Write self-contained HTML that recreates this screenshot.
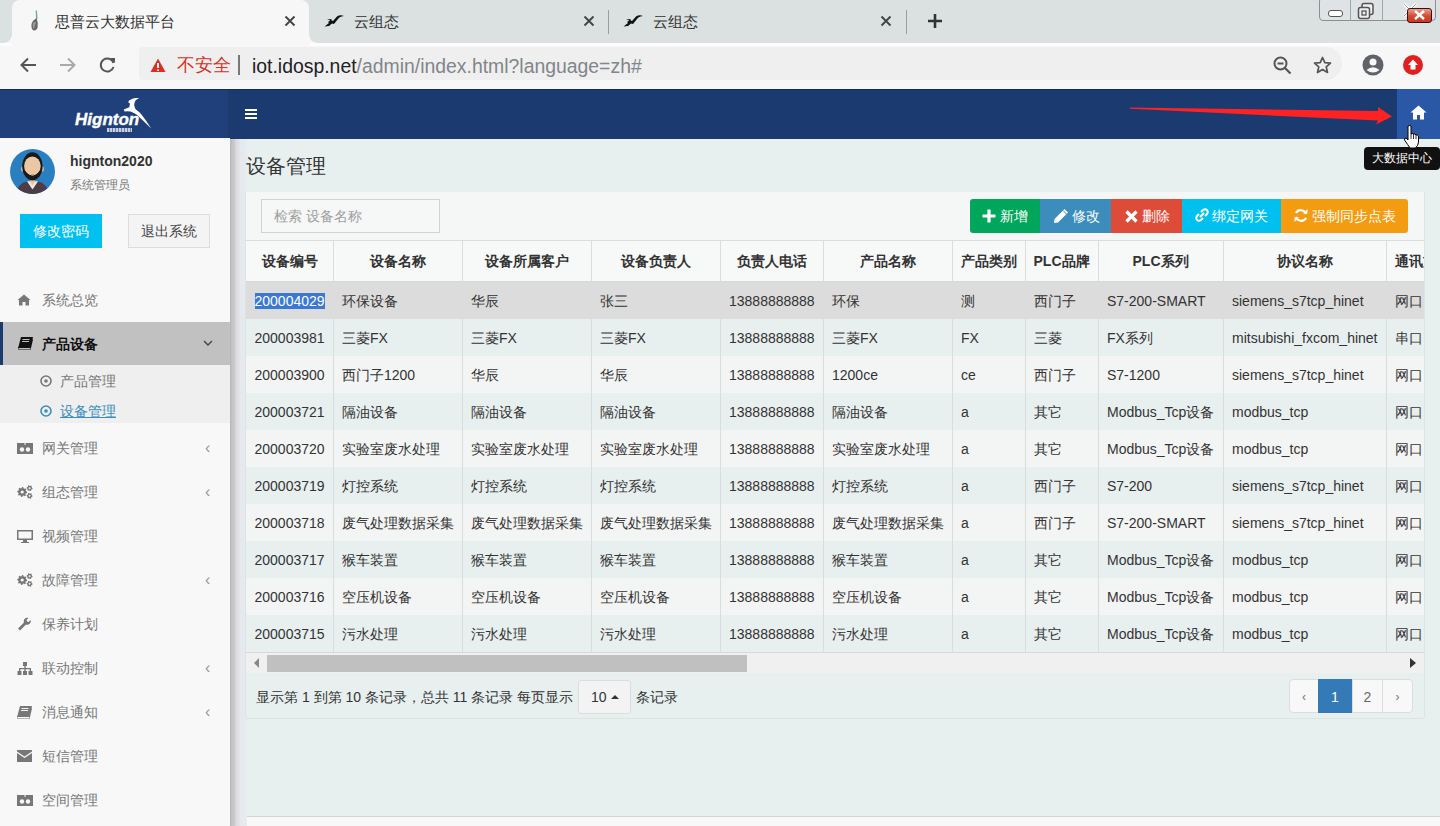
<!DOCTYPE html>
<html><head><meta charset="utf-8">
<style>
*{box-sizing:border-box;margin:0;padding:0}
html,body{width:1440px;height:826px;overflow:hidden;background:#e8f0ef;font-family:"Liberation Sans",sans-serif;color:#333}
.abs{position:absolute}
#tabbar{position:absolute;left:0;top:0;width:1440px;height:43px;background:#dbe1e0}
#tab1{position:absolute;left:12px;top:0;width:297px;height:46px;background:#f7f7f7;border-radius:8px 8px 0 0;z-index:2}
.tabt,.tabx{z-index:3}
.tabt{position:absolute;top:12px;font-size:15px;color:#333;line-height:20px}
.tabx{position:absolute;top:15px;width:12px;height:12px}
.tsep{position:absolute;top:10px;width:1px;height:24px;background:#9aa0a0}
#toolbar{position:absolute;left:0;top:43px;width:1440px;height:46px;background:#f7f7f7;border-top:3px solid #fcfcfd}
#addr{position:absolute;left:139px;top:47px;width:1203px;height:33px;background:#efefef;border-radius:4px 16px 16px 4px}
#header{position:absolute;left:0;top:89px;width:1440px;height:50px;background:#1b3a6f;border-top:1px solid #142c57}
#logo{position:absolute;left:0;top:89px;width:228px;height:50px;background:#1f407a;border-top:1px solid #142c57}
#homebtn{position:absolute;left:1396px;top:89px;width:44px;height:50px;background:#2a58a6;border-left:1px solid #173a86}
#sidebar{position:absolute;left:0;top:138px;width:230px;height:688px;background:#f8f8f8}
#shadow{position:absolute;left:230px;top:139px;width:17px;height:687px;background:linear-gradient(to right,#b5b5b8 0px,#c4c4c7 2px,#cdcdd1 5px,#dcdce1 6px,#e0e0e5 9px,#e5e8ed 10px,#e6ebef 16px,#e7efee 17px)}
.mi{position:absolute;left:0;width:230px;height:44px;line-height:44px;font-size:14px;color:#777}
.mic{position:absolute;left:17px;top:0;height:44px;display:flex;align-items:center}
.mt{position:absolute;left:42px;top:0}
.chev{position:absolute;left:205px;top:0px;font-size:16px;color:#999}
#content{position:absolute;left:242px;top:138px;width:1198px;height:679px;background:#e8f0ef}
#footer{position:absolute;left:230px;top:816px;width:1210px;height:10px;background:#f8f8f8;border-top:1px solid #d2d6d6}
#box{position:absolute;left:245px;top:192px;width:1180px;height:527px;background:linear-gradient(#f5f6f6 0,#f5f6f6 48px,#e8f0ef 48px);border:1px solid #dde3e3;border-top:0;border-radius:0 0 3px 3px}
.thead{position:absolute;left:246px;width:1178px;background:#f7f8f8;border-top:1px solid #dcdcdc;border-bottom:1px solid #d8d8d8}
.th{position:absolute;text-align:center;font-weight:bold;font-size:14px;color:#333}
.tr{position:absolute;left:246px;width:1178px;height:37px}
.r1{background:#dcdcdc}
.re{background:#e8efef}
.ro{background:#f3f5f5}
.td{position:absolute;height:37px;line-height:37px;font-size:14px;color:#333;white-space:nowrap}
.sel{background:#3a78d6;color:#fff}
.vl{position:absolute;top:241px;width:1px;height:411px;background:#dadddd}
#clip{position:absolute;left:0;top:0;width:1424px;height:826px;overflow:hidden}
.btn{position:absolute;top:199px;height:34px;line-height:34px;color:#fff;font-size:14px;white-space:nowrap}
.pg{position:absolute;top:679px;height:34px;line-height:34px;text-align:center;font-size:14px;border:1px solid #ddd;background:#f8f8f8;color:#666}
</style></head><body>
<div id="tabbar"></div>
<div id="tab1"></div>
<div class="abs" style="left:4px;top:35px;width:8px;height:8px;z-index:2;background:radial-gradient(circle 8px at 0 0,#dbe1e0 7.4px,#f7f7f7 8px)"></div>
<div class="abs" style="left:309px;top:35px;width:8px;height:8px;z-index:2;background:radial-gradient(circle 8px at 100% 0,#dbe1e0 7.4px,#f7f7f7 8px)"></div>
<div class="abs" style="left:30px;top:10px;width:10px;height:22px;z-index:3"><svg width="10" height="22" viewBox="0 0 10 22"><path d="M6.3 0.5 L6.8 9" stroke="#6aa" stroke-width="1.4"/><path d="M6.5 8 Q3 10 1.5 14 Q1 19 3.5 20.5 Q6 21 7.5 18 Q8.5 13 6.5 8Z" fill="#666"/><path d="M3 13 Q4.5 11 6 12 Q5 16 4 19 Q2 17 3 13Z" fill="#999"/></svg></div>
<div class="tabt" style="left:55px">思普云大数据平台</div>
<svg class="tabx" style="left:284px" viewBox="0 0 12 12"><path d="M1.5 1.5 L10.5 10.5 M10.5 1.5 L1.5 10.5" stroke="#444" stroke-width="1.9"/></svg>
<svg class="abs" style="left:324px;top:14px" width="21" height="13" viewBox="0 0 21 13"><path d="M0.5 12.5 L5 9 L4 8 L7 6 L9 7 L13 2.5 Q16 0.5 20 2 L17.5 2.5 Q15 3 14 5 L10 10 L8 9.5 L5 12 Z M3 5.5 L8 5 L6.5 6.5Z" fill="#111"/></svg>
<div class="tabt" style="left:354px">云组态</div>
<svg class="tabx" style="left:583px" viewBox="0 0 12 12"><path d="M1.5 1.5 L10.5 10.5 M10.5 1.5 L1.5 10.5" stroke="#444" stroke-width="1.9"/></svg>
<div class="tsep" style="left:608px"></div>
<svg class="abs" style="left:623px;top:14px" width="21" height="13" viewBox="0 0 21 13"><path d="M0.5 12.5 L5 9 L4 8 L7 6 L9 7 L13 2.5 Q16 0.5 20 2 L17.5 2.5 Q15 3 14 5 L10 10 L8 9.5 L5 12 Z M3 5.5 L8 5 L6.5 6.5Z" fill="#111"/></svg>
<div class="tabt" style="left:653px">云组态</div>
<svg class="tabx" style="left:880px" viewBox="0 0 12 12"><path d="M1.5 1.5 L10.5 10.5 M10.5 1.5 L1.5 10.5" stroke="#444" stroke-width="1.9"/></svg>
<div class="tsep" style="left:906px"></div>
<svg class="abs" style="left:927px;top:13px" width="16" height="16" viewBox="0 0 16 16"><path d="M8 1 V15 M1 8 H15" stroke="#333" stroke-width="2.6"/></svg>
<!-- window controls -->
<div class="abs" style="left:1319px;top:-3px;width:117px;height:24px;border:1.5px solid #8a9090;border-radius:4px;background:#dfe3e6"></div>
<div class="abs" style="left:1350px;top:0;width:1px;height:21px;background:#9aa"></div>
<div class="abs" style="left:1382px;top:0;width:1px;height:21px;background:#9aa"></div>
<div class="abs" style="left:1328px;top:10px;width:15px;height:7px;border:1.5px solid #555;border-radius:3px;background:#fff"></div>
<svg class="abs" style="left:1357px;top:2px" width="18" height="18" viewBox="0 0 18 18"><rect x="5" y="1.5" width="11" height="11" rx="2" fill="#eee" stroke="#555" stroke-width="1.5"/><rect x="1.5" y="5.5" width="11" height="11" rx="2" fill="#eee" stroke="#555" stroke-width="1.5"/><rect x="5" y="9" width="4" height="4" fill="none" stroke="#555" stroke-width="1.3"/></svg>
<svg class="abs" style="left:1402px;top:3px" width="16" height="14" viewBox="0 0 16 14"><path d="M2 1 L14 13 M14 1 L2 13" stroke="#fff" stroke-width="3"/><path d="M2 1 L14 13 M14 1 L2 13" stroke="#9aa" stroke-width="1"/></svg>
<div class="abs" style="left:1407px;top:8px;width:25px;height:15px;border:1.3px solid #3a1010;border-radius:3px;background:linear-gradient(#e8a090,#d24a35 55%,#c83a28)"></div>
<svg class="abs" style="left:1414px;top:10px" width="11" height="10" viewBox="0 0 11 10"><path d="M1 1 L10 9 M10 1 L1 9" stroke="#fff" stroke-width="2.4"/></svg>
<!-- toolbar -->
<div id="toolbar"></div>
<div id="addr"></div>
<svg class="abs" style="left:20px;top:57px" width="17" height="16" viewBox="0 0 17 16"><path d="M16 8 H2 M8 1.5 L1.5 8 L8 14.5" fill="none" stroke="#555" stroke-width="2"/></svg>
<svg class="abs" style="left:59px;top:57px" width="17" height="16" viewBox="0 0 17 16"><path d="M1 8 H15 M9 1.5 L15.5 8 L9 14.5" fill="none" stroke="#aaa" stroke-width="2"/></svg>
<svg class="abs" style="left:99px;top:56px" width="18" height="18" viewBox="0 0 18 18"><path d="M14.5 7 A6.5 6.5 0 1 0 14.5 11" fill="none" stroke="#555" stroke-width="2"/><path d="M11 2 H16 V7Z" fill="#555"/></svg>
<svg class="abs" style="left:150px;top:58px" width="16" height="15" viewBox="0 0 16 15"><path d="M8 0.5 L15.5 14 H0.5Z" fill="#d93025"/><path d="M8 5 V10 M8 11.5 V13" stroke="#fff" stroke-width="1.8"/></svg>
<div class="abs" style="left:177px;top:53px;font-size:18px;line-height:24px;color:#d93025">不安全</div>
<div class="abs" style="left:238px;top:55px;width:2px;height:20px;background:#777"></div>
<div class="abs" style="left:252px;top:53px;font-size:19.4px;line-height:26px;color:#202124;white-space:nowrap">iot.idosp.net<span style="color:#80868b">/admin/index.html?language=zh#</span></div>
<svg class="abs" style="left:1273px;top:56px" width="19" height="19" viewBox="0 0 19 19"><circle cx="7.5" cy="7.5" r="6" fill="none" stroke="#555" stroke-width="2"/><path d="M4.5 7.5 H10.5" stroke="#555" stroke-width="2"/><path d="M12 12 L17.5 17.5" stroke="#555" stroke-width="2.2"/></svg>
<svg class="abs" style="left:1313px;top:56px" width="19" height="18" viewBox="0 0 19 18"><path d="M9.5 1.5 L11.8 6.7 L17.5 7.1 L13.2 10.8 L14.5 16.5 L9.5 13.5 L4.5 16.5 L5.8 10.8 L1.5 7.1 L7.2 6.7Z" fill="none" stroke="#555" stroke-width="1.7" stroke-linejoin="round"/></svg>
<svg class="abs" style="left:1362px;top:54px" width="22" height="22" viewBox="0 0 22 22"><circle cx="11" cy="11" r="10.5" fill="#5f6368"/><circle cx="11" cy="8" r="3.5" fill="#f7f7f7"/><path d="M4.5 16 Q11 10.5 17.5 16 Q11 21 4.5 16Z" fill="#f7f7f7"/></svg>
<svg class="abs" style="left:1403px;top:55px" width="20" height="20" viewBox="0 0 20 20"><circle cx="10" cy="10" r="10" fill="#e02020"/><path d="M10 4.5 L15 10 H12.5 V14.5 H7.5 V10 H5Z" fill="#fff"/></svg>
<!-- header -->
<div id="header"></div>
<div id="logo"></div>
<div class="abs" style="left:75px;top:110px;font-size:17px;line-height:20.5px;font-weight:bold;font-style:italic;color:#fff;letter-spacing:0px;-webkit-text-stroke:0.4px #fff">Hignton</div>
<svg class="abs" style="left:115px;top:92px" width="40" height="40" viewBox="0 0 40 40"><path d="M24 6.2 Q20.5 5.4 18 6.6 L14 8.6 L13.3 10.6 L15 11.6 L14.3 15.2 Q11 16.6 8.8 17.6 L9.6 19.4 Q12.5 19 15.6 19.4 Q19 20.6 21.5 22.6 Q29 29.5 36.2 36.4 Q32 29.5 25.5 21.2 Q22.5 18.8 20.6 17.2 Q19.2 14.8 19.2 12.8 Q19.5 10 20.5 8.6 Q21.8 7 24 6.6Z" fill="#fff"/></svg>
<div class="abs" style="left:107px;top:128px;width:25px;height:4px;background:repeating-linear-gradient(to right,rgba(255,255,255,0.75) 0 2px,rgba(255,255,255,0.35) 2px 3px)"></div>
<div class="abs" style="left:245px;top:109px;width:12px;height:2px;background:#fff"></div>
<div class="abs" style="left:245px;top:113px;width:12px;height:2px;background:#fff"></div>
<div class="abs" style="left:245px;top:117px;width:12px;height:2px;background:#fff"></div>
<svg class="abs" style="left:1130px;top:106px" width="264" height="20" viewBox="0 0 264 20"><path d="M0 1.5 L248 5 L248 1 L262 10.5 L246 18.5 L248 14.5 L0 2.8Z" fill="#ff2222"/></svg>
<div id="homebtn"></div>
<svg class="abs" style="left:1410px;top:105px" width="17" height="15" viewBox="0 0 17 15"><path d="M8.5 0.5 L0.5 7.5 L3 7.5 L3 14.5 L7 14.5 L7 10 L10 10 L10 14.5 L14 14.5 L14 7.5 L16.5 7.5Z" fill="#fff"/></svg>
<!-- sidebar -->
<div id="sidebar"></div>
<svg class="abs" style="left:10px;top:149px" width="45" height="45" viewBox="0 0 45 45"><defs><clipPath id="cc"><circle cx="22.5" cy="22.5" r="22.5"/></clipPath></defs><g clip-path="url(#cc)"><rect width="45" height="45" fill="#2a7fc1"/><path d="M5 46 Q8 34 17 32.5 L22.5 40 L28 32.5 Q37 34 40 46Z" fill="#4d3b47"/><path d="M17 32.3 L22.5 40.5 L28 32.3Z" fill="#f3e6da"/><path d="M19.5 31.5 L22.5 36.5 L25.5 31.5Z" fill="#e8c3a0"/><ellipse cx="12.8" cy="20" rx="1.7" ry="2.7" fill="#e8c3a0"/><ellipse cx="32.2" cy="20" rx="1.7" ry="2.7" fill="#e8c3a0"/><ellipse cx="22.4" cy="17.3" rx="10.2" ry="14" fill="#1a1a1a"/><ellipse cx="22.4" cy="17" rx="8.3" ry="9.6" fill="#eac7a5"/><path d="M15 22 Q22.4 31 29.8 22 L29.8 26 Q22.4 32 15 26Z" fill="#1a1a1a"/><rect x="21.3" y="25.2" width="2.4" height="1.6" fill="#c98a50"/></g></svg>
<div class="abs" style="left:70px;top:153px;font-size:14px;font-weight:bold;color:#333">hignton2020</div>
<div class="abs" style="left:70px;top:177px;font-size:12px;color:#777">系统管理员</div>
<div class="abs" style="left:20px;top:214px;width:82px;height:34px;background:#00c0ef;color:#fff;font-size:14px;line-height:34px;text-align:center">修改密码</div>
<div class="abs" style="left:128px;top:214px;width:82px;height:34px;background:#f4f4f4;border:1px solid #ddd;color:#444;font-size:14px;line-height:32px;text-align:center">退出系统</div>
<div class="mi" style="top:278px"><span class="mic"><svg width="14" height="12" viewBox="0 0 14 12"><path d="M7 0.5 L0.5 6 L2 6 L2 11.5 L5.5 11.5 L5.5 8 L8.5 8 L8.5 11.5 L12 11.5 L12 6 L13.5 6 Z" fill="#777"/></svg></span><span class="mt">系统总览</span></div>
<div class="mi" style="top:426px"><span class="mic"><svg width="16" height="12" viewBox="0 0 16 12"><path d="M0 1 H16 V12 H0 Z" fill="#777"/><circle cx="5" cy="7.5" r="2.2" fill="#f8f8f8"/><circle cx="11" cy="7.5" r="2.2" fill="#f8f8f8"/><path d="M7.5 0 H8.5 V3 H7.5Z" fill="#f8f8f8"/></svg></span><span class="mt">网关管理</span><span class="chev">‹</span></div>
<div class="mi" style="top:470px"><span class="mic"><svg width="16" height="14" viewBox="0 0 16 14"><path d="M10.20 7.00 L10.10 7.98 L8.80 8.49 L8.44 9.17 L8.74 10.54 L7.98 11.16 L6.69 10.60 L5.96 10.83 L5.20 12.00 L4.22 11.90 L3.71 10.60 L3.03 10.24 L1.66 10.54 L1.04 9.78 L1.60 8.49 L1.37 7.76 L0.20 7.00 L0.30 6.02 L1.60 5.51 L1.96 4.83 L1.66 3.46 L2.42 2.84 L3.71 3.40 L4.44 3.17 L5.20 2.00 L6.18 2.10 L6.69 3.40 L7.37 3.76 L8.74 3.46 L9.36 4.22 L8.80 5.51 L9.03 6.24Z M6.80 7.00 A1.6 1.6 0 1 0 3.60 7.00 A1.6 1.6 0 1 0 6.80 7.00Z M15.60 3.20 L15.50 3.98 L14.59 4.35 L14.23 4.83 L14.10 5.80 L13.38 6.10 L12.60 5.50 L12.00 5.42 L11.10 5.80 L10.48 5.32 L10.61 4.35 L10.38 3.80 L9.60 3.20 L9.70 2.42 L10.61 2.05 L10.97 1.57 L11.10 0.60 L11.82 0.30 L12.60 0.90 L13.20 0.98 L14.10 0.60 L14.72 1.08 L14.59 2.05 L14.82 2.60Z M13.60 3.20 A1.0 1.0 0 1 0 11.60 3.20 A1.0 1.0 0 1 0 13.60 3.20Z M15.60 10.80 L15.50 11.58 L14.59 11.95 L14.23 12.43 L14.10 13.40 L13.38 13.70 L12.60 13.10 L12.00 13.02 L11.10 13.40 L10.48 12.92 L10.61 11.95 L10.38 11.40 L9.60 10.80 L9.70 10.02 L10.61 9.65 L10.97 9.17 L11.10 8.20 L11.82 7.90 L12.60 8.50 L13.20 8.58 L14.10 8.20 L14.72 8.68 L14.59 9.65 L14.82 10.20Z M13.60 10.80 A1.0 1.0 0 1 0 11.60 10.80 A1.0 1.0 0 1 0 13.60 10.80Z" fill="#777" fill-rule="evenodd"/></svg></span><span class="mt">组态管理</span><span class="chev">‹</span></div>
<div class="mi" style="top:514px"><span class="mic"><svg width="16" height="13" viewBox="0 0 16 13"><path d="M0 0 H16 V10 H0Z M1.5 1.5 V8.5 H14.5 V1.5Z" fill="#777" fill-rule="evenodd"/><path d="M6 10 H10 V12 H12 V13 H4 V12 H6Z" fill="#777"/></svg></span><span class="mt">视频管理</span></div>
<div class="mi" style="top:558px"><span class="mic"><svg width="16" height="14" viewBox="0 0 16 14"><path d="M10.20 7.00 L10.10 7.98 L8.80 8.49 L8.44 9.17 L8.74 10.54 L7.98 11.16 L6.69 10.60 L5.96 10.83 L5.20 12.00 L4.22 11.90 L3.71 10.60 L3.03 10.24 L1.66 10.54 L1.04 9.78 L1.60 8.49 L1.37 7.76 L0.20 7.00 L0.30 6.02 L1.60 5.51 L1.96 4.83 L1.66 3.46 L2.42 2.84 L3.71 3.40 L4.44 3.17 L5.20 2.00 L6.18 2.10 L6.69 3.40 L7.37 3.76 L8.74 3.46 L9.36 4.22 L8.80 5.51 L9.03 6.24Z M6.80 7.00 A1.6 1.6 0 1 0 3.60 7.00 A1.6 1.6 0 1 0 6.80 7.00Z M15.60 3.20 L15.50 3.98 L14.59 4.35 L14.23 4.83 L14.10 5.80 L13.38 6.10 L12.60 5.50 L12.00 5.42 L11.10 5.80 L10.48 5.32 L10.61 4.35 L10.38 3.80 L9.60 3.20 L9.70 2.42 L10.61 2.05 L10.97 1.57 L11.10 0.60 L11.82 0.30 L12.60 0.90 L13.20 0.98 L14.10 0.60 L14.72 1.08 L14.59 2.05 L14.82 2.60Z M13.60 3.20 A1.0 1.0 0 1 0 11.60 3.20 A1.0 1.0 0 1 0 13.60 3.20Z M15.60 10.80 L15.50 11.58 L14.59 11.95 L14.23 12.43 L14.10 13.40 L13.38 13.70 L12.60 13.10 L12.00 13.02 L11.10 13.40 L10.48 12.92 L10.61 11.95 L10.38 11.40 L9.60 10.80 L9.70 10.02 L10.61 9.65 L10.97 9.17 L11.10 8.20 L11.82 7.90 L12.60 8.50 L13.20 8.58 L14.10 8.20 L14.72 8.68 L14.59 9.65 L14.82 10.20Z M13.60 10.80 A1.0 1.0 0 1 0 11.60 10.80 A1.0 1.0 0 1 0 13.60 10.80Z" fill="#777" fill-rule="evenodd"/></svg></span><span class="mt">故障管理</span><span class="chev">‹</span></div>
<div class="mi" style="top:602px"><span class="mic"><svg width="14" height="14" viewBox="0 0 14 14"><path d="M1 11.5 L7 5.5 A3.5 3.5 0 0 1 11.5 1 L9.5 3 L10 4.5 L11.5 5 L13.5 3 A3.5 3.5 0 0 1 9 7.5 L3 13.5 Z" fill="#777"/></svg></span><span class="mt">保养计划</span></div>
<div class="mi" style="top:646px"><span class="mic"><svg width="16" height="13" viewBox="0 0 16 13"><path d="M6 0 H10 V4 H8.7 V6 H14 V9 H15.5 V13 H11.5 V9 H12.7 V7.3 H8.7 V9 H10 V13 H6 V9 H7.3 V7.3 H3.3 V9 H4.5 V13 H0.5 V9 H2 V6 H7.3 V4 H6Z" fill="#777"/></svg></span><span class="mt">联动控制</span><span class="chev">‹</span></div>
<div class="mi" style="top:690px"><span class="mic"><svg width="15" height="13" viewBox="0 0 15 13"><path d="M3 0 H15 L12.5 11 H1.5 Q0 11 0.3 12.5 H12 L14.5 2 L15 2.5 L12.5 13 H0.5 Q-1 12 0.5 9.5Z" fill="#777"/><path d="M4.5 2.5 H11.5 M4 4.5 H11" stroke="#f8f8f8" stroke-width="1"/></svg></span><span class="mt">消息通知</span><span class="chev">‹</span></div>
<div class="mi" style="top:734px"><span class="mic"><svg width="15" height="12" viewBox="0 0 15 12"><path d="M0 0 H15 V1.5 L7.5 6.5 L0 1.5Z" fill="#777"/><path d="M0 3 L7.5 8 L15 3 V12 H0Z" fill="#777"/></svg></span><span class="mt">短信管理</span></div>
<div class="mi" style="top:778px"><span class="mic"><svg width="16" height="12" viewBox="0 0 16 12"><path d="M0 1 H16 V12 H0 Z" fill="#777"/><circle cx="5" cy="7.5" r="2.2" fill="#f8f8f8"/><circle cx="11" cy="7.5" r="2.2" fill="#f8f8f8"/><path d="M7.5 0 H8.5 V3 H7.5Z" fill="#f8f8f8"/></svg></span><span class="mt">空间管理</span></div>
<div class="abs" style="left:0;top:322px;width:230px;height:43px;background:#c1c1c1;border-left:3px solid #1b3a6f"></div>
<svg class="abs" style="left:18px;top:337px" width="15" height="13" viewBox="0 0 15 13"><path d="M3 0 H15 L12.5 11 H1.5 Q0 11 0.3 12.5 H12 L14.5 2 L15 2.5 L12.5 13 H0.5 Q-1 12 0.5 9.5Z" fill="#111"/><path d="M4.5 2.5 H11.5 M4 4.5 H11" stroke="#c1c1c1" stroke-width="1"/></svg>
<div class="abs" style="left:42px;top:323px;line-height:43px;font-size:14px;font-weight:bold;color:#111">产品设备</div>
<svg class="abs" style="left:203px;top:340px" width="10" height="7" viewBox="0 0 10 7"><path d="M1 1 L5 5 L9 1" fill="none" stroke="#444" stroke-width="1.4"/></svg>
<div class="abs" style="left:0;top:365px;width:230px;height:58px;background:#efefef"></div>
<svg class="abs" style="left:40px;top:375px" width="12" height="12" viewBox="0 0 12 12"><circle cx="6" cy="6" r="5" fill="none" stroke="#777" stroke-width="1.6"/><circle cx="6" cy="6" r="1.8" fill="#777"/></svg>
<div class="abs" style="left:60px;top:371px;font-size:14px;line-height:20px;color:#777">产品管理</div>
<svg class="abs" style="left:40px;top:405px" width="12" height="12" viewBox="0 0 12 12"><circle cx="6" cy="6" r="5" fill="none" stroke="#3c8dbc" stroke-width="1.6"/><circle cx="6" cy="6" r="1.8" fill="#3c8dbc"/></svg>
<div class="abs" style="left:60px;top:401px;font-size:14px;line-height:20px;color:#3c8dbc;text-decoration:underline">设备管理</div>
<div id="footer"></div>
<div id="shadow"></div>
<!-- content -->
<div class="abs" style="left:246px;top:154px;font-size:20px;line-height:24px;color:#333">设备管理</div>
<div id="box"></div>
<div class="abs" style="left:261px;top:199px;width:179px;height:34px;border:1px solid #d2d4d4;background:#f6f7f7"></div>
<div class="abs" style="left:274px;top:206px;font-size:14px;line-height:20px;color:#a0a0a0">检索 设备名称</div>
<div class="btn" style="left:970px;width:70px;background:#00a65a;border-radius:3px 0 0 3px"></div>
<div class="btn" style="left:1040px;width:71px;background:#3c8dbc"></div>
<div class="btn" style="left:1111px;width:71px;background:#dd4b39"></div>
<div class="btn" style="left:1182px;width:99px;background:#00c0ef"></div>
<div class="btn" style="left:1281px;width:127px;background:#f39c12;border-radius:0 3px 3px 0"></div>
<svg class="abs" style="left:982px;top:209px" width="14" height="14" viewBox="0 0 14 14"><path d="M7 0.5 V13.5 M0.5 7 H13.5" stroke="#fff" stroke-width="3.2"/></svg>
<div class="btn" style="left:1000px">新增</div>
<svg class="abs" style="left:1053px;top:208px" width="16" height="16" viewBox="0 0 16 16"><path d="M11.5 1 L15 4.5 L5 14.5 L1 15 L1.5 11Z" fill="#fff"/><path d="M10 2.5 L13.5 6" stroke="#3c8dbc" stroke-width="1"/></svg>
<div class="btn" style="left:1072px">修改</div>
<svg class="abs" style="left:1125px;top:210px" width="13" height="13" viewBox="0 0 13 13"><path d="M1.5 1.5 L11.5 11.5 M11.5 1.5 L1.5 11.5" stroke="#fff" stroke-width="3.2"/></svg>
<div class="btn" style="left:1142px">删除</div>
<svg class="abs" style="left:1195px;top:208px" width="14" height="14" viewBox="0 0 14 14"><path d="M6 4 L8 2 Q10 0.5 12 2 Q13.5 4 12 6 L10 8 M8 10 L6 12 Q4 13.5 2 12 Q0.5 10 2 8 L4 6 M5 9 L9 5" fill="none" stroke="#fff" stroke-width="2"/></svg>
<div class="btn" style="left:1212px">绑定网关</div>
<svg class="abs" style="left:1294px;top:208px" width="14" height="15" viewBox="0 0 14 15"><path d="M12 6 A5.5 5.5 0 0 0 2 5 M2 9 A5.5 5.5 0 0 0 12 10" fill="none" stroke="#fff" stroke-width="2.2"/><path d="M9 5.5 H13.5 V1Z M5 9.5 H0.5 V14Z" fill="#fff"/></svg>
<div class="btn" style="left:1312px">强制同步点表</div>
<div id="clip">
<div class="thead" style="top:240px;height:42px"></div>
<div class="th" style="left:246px;width:87px;top:240px;height:42px;line-height:42px">设备编号</div>
<div class="th" style="left:333px;width:129px;top:240px;height:42px;line-height:42px">设备名称</div>
<div class="th" style="left:462px;width:129px;top:240px;height:42px;line-height:42px">设备所属客户</div>
<div class="th" style="left:591px;width:129px;top:240px;height:42px;line-height:42px">设备负责人</div>
<div class="th" style="left:720px;width:103px;top:240px;height:42px;line-height:42px">负责人电话</div>
<div class="th" style="left:823px;width:129px;top:240px;height:42px;line-height:42px">产品名称</div>
<div class="th" style="left:952px;width:73px;top:240px;height:42px;line-height:42px">产品类别</div>
<div class="th" style="left:1025px;width:73px;top:240px;height:42px;line-height:42px">PLC品牌</div>
<div class="th" style="left:1098px;width:125px;top:240px;height:42px;line-height:42px">PLC系列</div>
<div class="th" style="left:1223px;width:163px;top:240px;height:42px;line-height:42px">协议名称</div>
<div class="th" style="left:1386px;width:74px;top:240px;height:42px;line-height:42px">通讯方式</div>
<div class="tr r1" style="top:282px"></div>
<div class="td" style="left:254.5px;top:283px"><span class="sel">200004029</span></div>
<div class="td" style="left:342px;top:283px">环保设备</div>
<div class="td" style="left:471px;top:283px">华辰</div>
<div class="td" style="left:600px;top:283px">张三</div>
<div class="td" style="left:729px;top:283px">13888888888</div>
<div class="td" style="left:832px;top:283px">环保</div>
<div class="td" style="left:961px;top:283px">测</div>
<div class="td" style="left:1034px;top:283px">西门子</div>
<div class="td" style="left:1107px;top:283px">S7-200-SMART</div>
<div class="td" style="left:1232px;top:283px">siemens_s7tcp_hinet</div>
<div class="td" style="left:1395px;top:283px">网口</div>
<div class="tr re" style="top:319px"></div>
<div class="td" style="left:254.5px;top:320px">200003981</div>
<div class="td" style="left:342px;top:320px">三菱FX</div>
<div class="td" style="left:471px;top:320px">三菱FX</div>
<div class="td" style="left:600px;top:320px">三菱FX</div>
<div class="td" style="left:729px;top:320px">13888888888</div>
<div class="td" style="left:832px;top:320px">三菱FX</div>
<div class="td" style="left:961px;top:320px">FX</div>
<div class="td" style="left:1034px;top:320px">三菱</div>
<div class="td" style="left:1107px;top:320px">FX系列</div>
<div class="td" style="left:1232px;top:320px">mitsubishi_fxcom_hinet</div>
<div class="td" style="left:1395px;top:320px">串口</div>
<div class="tr ro" style="top:356px"></div>
<div class="td" style="left:254.5px;top:357px">200003900</div>
<div class="td" style="left:342px;top:357px">西门子1200</div>
<div class="td" style="left:471px;top:357px">华辰</div>
<div class="td" style="left:600px;top:357px">华辰</div>
<div class="td" style="left:729px;top:357px">13888888888</div>
<div class="td" style="left:832px;top:357px">1200ce</div>
<div class="td" style="left:961px;top:357px">ce</div>
<div class="td" style="left:1034px;top:357px">西门子</div>
<div class="td" style="left:1107px;top:357px">S7-1200</div>
<div class="td" style="left:1232px;top:357px">siemens_s7tcp_hinet</div>
<div class="td" style="left:1395px;top:357px">网口</div>
<div class="tr re" style="top:393px"></div>
<div class="td" style="left:254.5px;top:394px">200003721</div>
<div class="td" style="left:342px;top:394px">隔油设备</div>
<div class="td" style="left:471px;top:394px">隔油设备</div>
<div class="td" style="left:600px;top:394px">隔油设备</div>
<div class="td" style="left:729px;top:394px">13888888888</div>
<div class="td" style="left:832px;top:394px">隔油设备</div>
<div class="td" style="left:961px;top:394px">a</div>
<div class="td" style="left:1034px;top:394px">其它</div>
<div class="td" style="left:1107px;top:394px">Modbus_Tcp设备</div>
<div class="td" style="left:1232px;top:394px">modbus_tcp</div>
<div class="td" style="left:1395px;top:394px">网口</div>
<div class="tr ro" style="top:430px"></div>
<div class="td" style="left:254.5px;top:431px">200003720</div>
<div class="td" style="left:342px;top:431px">实验室废水处理</div>
<div class="td" style="left:471px;top:431px">实验室废水处理</div>
<div class="td" style="left:600px;top:431px">实验室废水处理</div>
<div class="td" style="left:729px;top:431px">13888888888</div>
<div class="td" style="left:832px;top:431px">实验室废水处理</div>
<div class="td" style="left:961px;top:431px">a</div>
<div class="td" style="left:1034px;top:431px">其它</div>
<div class="td" style="left:1107px;top:431px">Modbus_Tcp设备</div>
<div class="td" style="left:1232px;top:431px">modbus_tcp</div>
<div class="td" style="left:1395px;top:431px">网口</div>
<div class="tr re" style="top:467px"></div>
<div class="td" style="left:254.5px;top:468px">200003719</div>
<div class="td" style="left:342px;top:468px">灯控系统</div>
<div class="td" style="left:471px;top:468px">灯控系统</div>
<div class="td" style="left:600px;top:468px">灯控系统</div>
<div class="td" style="left:729px;top:468px">13888888888</div>
<div class="td" style="left:832px;top:468px">灯控系统</div>
<div class="td" style="left:961px;top:468px">a</div>
<div class="td" style="left:1034px;top:468px">西门子</div>
<div class="td" style="left:1107px;top:468px">S7-200</div>
<div class="td" style="left:1232px;top:468px">siemens_s7tcp_hinet</div>
<div class="td" style="left:1395px;top:468px">网口</div>
<div class="tr ro" style="top:504px"></div>
<div class="td" style="left:254.5px;top:505px">200003718</div>
<div class="td" style="left:342px;top:505px">废气处理数据采集</div>
<div class="td" style="left:471px;top:505px">废气处理数据采集</div>
<div class="td" style="left:600px;top:505px">废气处理数据采集</div>
<div class="td" style="left:729px;top:505px">13888888888</div>
<div class="td" style="left:832px;top:505px">废气处理数据采集</div>
<div class="td" style="left:961px;top:505px">a</div>
<div class="td" style="left:1034px;top:505px">西门子</div>
<div class="td" style="left:1107px;top:505px">S7-200-SMART</div>
<div class="td" style="left:1232px;top:505px">siemens_s7tcp_hinet</div>
<div class="td" style="left:1395px;top:505px">网口</div>
<div class="tr re" style="top:541px"></div>
<div class="td" style="left:254.5px;top:542px">200003717</div>
<div class="td" style="left:342px;top:542px">猴车装置</div>
<div class="td" style="left:471px;top:542px">猴车装置</div>
<div class="td" style="left:600px;top:542px">猴车装置</div>
<div class="td" style="left:729px;top:542px">13888888888</div>
<div class="td" style="left:832px;top:542px">猴车装置</div>
<div class="td" style="left:961px;top:542px">a</div>
<div class="td" style="left:1034px;top:542px">其它</div>
<div class="td" style="left:1107px;top:542px">Modbus_Tcp设备</div>
<div class="td" style="left:1232px;top:542px">modbus_tcp</div>
<div class="td" style="left:1395px;top:542px">网口</div>
<div class="tr ro" style="top:578px"></div>
<div class="td" style="left:254.5px;top:579px">200003716</div>
<div class="td" style="left:342px;top:579px">空压机设备</div>
<div class="td" style="left:471px;top:579px">空压机设备</div>
<div class="td" style="left:600px;top:579px">空压机设备</div>
<div class="td" style="left:729px;top:579px">13888888888</div>
<div class="td" style="left:832px;top:579px">空压机设备</div>
<div class="td" style="left:961px;top:579px">a</div>
<div class="td" style="left:1034px;top:579px">其它</div>
<div class="td" style="left:1107px;top:579px">Modbus_Tcp设备</div>
<div class="td" style="left:1232px;top:579px">modbus_tcp</div>
<div class="td" style="left:1395px;top:579px">网口</div>
<div class="tr re" style="top:615px"></div>
<div class="td" style="left:254.5px;top:616px">200003715</div>
<div class="td" style="left:342px;top:616px">污水处理</div>
<div class="td" style="left:471px;top:616px">污水处理</div>
<div class="td" style="left:600px;top:616px">污水处理</div>
<div class="td" style="left:729px;top:616px">13888888888</div>
<div class="td" style="left:832px;top:616px">污水处理</div>
<div class="td" style="left:961px;top:616px">a</div>
<div class="td" style="left:1034px;top:616px">其它</div>
<div class="td" style="left:1107px;top:616px">Modbus_Tcp设备</div>
<div class="td" style="left:1232px;top:616px">modbus_tcp</div>
<div class="td" style="left:1395px;top:616px">网口</div>
<div class="vl" style="left:333px"></div>
<div class="vl" style="left:462px"></div>
<div class="vl" style="left:591px"></div>
<div class="vl" style="left:720px"></div>
<div class="vl" style="left:823px"></div>
<div class="vl" style="left:952px"></div>
<div class="vl" style="left:1025px"></div>
<div class="vl" style="left:1098px"></div>
<div class="vl" style="left:1223px"></div>
<div class="vl" style="left:1386px"></div>
</div>
<div class="abs" style="left:246px;top:652px;width:1178px;height:21px;background:#f0f0f0;border-top:1px solid #d8d8d8"></div>
<div class="abs" style="left:267px;top:655px;width:480px;height:17px;background:#c0c0c0"></div>
<svg class="abs" style="left:254px;top:658px" width="6" height="10" viewBox="0 0 6 10"><path d="M5 0 L0 5 L5 10Z" fill="#888"/></svg>
<svg class="abs" style="left:1410px;top:658px" width="6" height="10" viewBox="0 0 6 10"><path d="M0 0 L6 5 L0 10Z" fill="#333"/></svg>
<div class="abs" style="left:256px;top:687px;font-size:14px;line-height:20px;color:#333;white-space:nowrap">显示第 1 到第 10 条记录，总共 11 条记录 每页显示</div>
<div class="abs" style="left:578px;top:680px;width:53px;height:34px;border:1px solid #ddd;background:#f3f3f3;border-radius:3px"></div>
<div class="abs" style="left:591px;top:687px;font-size:14px;line-height:20px;color:#333">10</div>
<svg class="abs" style="left:611px;top:695px" width="8" height="4" viewBox="0 0 8 4"><path d="M0 4 L4 0 L8 4Z" fill="#333"/></svg>
<div class="abs" style="left:636px;top:687px;font-size:14px;line-height:20px;color:#333">条记录</div>
<div class="pg" style="left:1289px;width:30px;border-radius:4px 0 0 4px;font-size:12px;color:#777">‹</div>
<div class="pg" style="left:1318px;width:34px;background:#337ab7;border-color:#337ab7;color:#fff">1</div>
<div class="pg" style="left:1352px;width:31px">2</div>
<div class="pg" style="left:1382px;width:31px;border-radius:0 4px 4px 0;font-size:12px;color:#777">›</div>
<!-- tooltip + cursor -->
<div class="abs" style="left:1364px;top:147px;width:76px;height:23px;background:#111;border-radius:4px;color:#fff;font-size:12px;line-height:23px;padding-left:8px;white-space:nowrap">大数据中心</div>
<svg class="abs" style="left:1403px;top:125px" width="20" height="24" viewBox="0 0 20 24"><path d="M5 1 Q6.5 0 8 1 V9 Q9 8 10.5 9 Q12 8.5 13 10 Q14.5 9.5 15.5 11 V17 Q15 21 12.5 23 H7 Q5 20 1.5 15 Q1 13 3 13 L5 15Z" fill="#fff" stroke="#000" stroke-width="1"/><path d="M8 9 V14 M10.5 9 V14 M13 10 V14" stroke="#000" stroke-width="0.8"/></svg>
</body></html>
